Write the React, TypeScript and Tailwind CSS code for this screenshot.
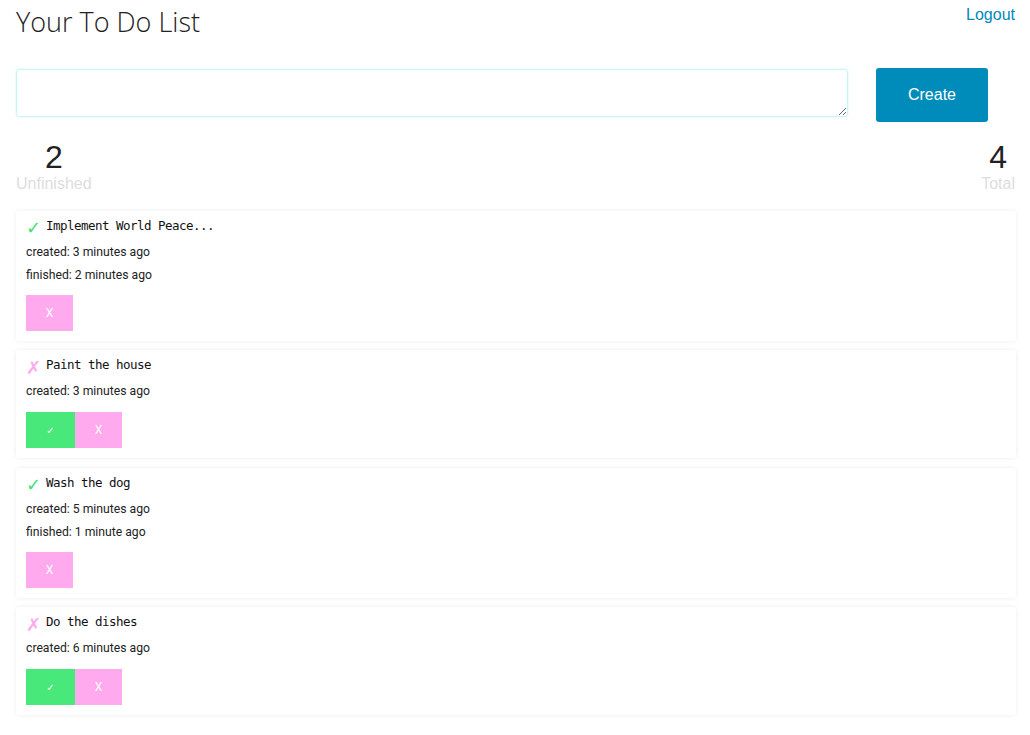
import React from "react";

type Todo = {
  title: string;
  done: boolean;
  created: string;
  finished?: string;
};

const todos: Todo[] = [
  { title: "Implement World Peace...", done: true, created: "3 minutes ago", finished: "2 minutes ago" },
  { title: "Paint the house", done: false, created: "3 minutes ago" },
  { title: "Wash the dog", done: true, created: "5 minutes ago", finished: "1 minute ago" },
  { title: "Do the dishes", done: false, created: "6 minutes ago" },
];

function Card({ t }: { t: Todo }) {
  return (
    <div className="bg-white rounded-[3px] shadow-[0_0_4px_rgba(0,0,0,0.08)] pt-[6px] pb-[10px] px-[10px]">
      <div className="flex items-center h-[18px]">
        {t.done ? (
          <span className="w-[20px] text-[#44dd77] text-[18px] leading-[18px] font-['DejaVu_Sans',sans-serif] mt-[5px]">✓</span>
        ) : (
          <span className="w-[20px] text-[#ffaaee] text-[18px] leading-[18px] font-['DejaVu_Sans',sans-serif] mt-[5px]">✗</span>
        )}
        <span className="font-['DejaVu_Sans_Mono',monospace] text-[12.5px] tracking-[-0.53px] leading-[18px] text-[#111]">{t.title}</span>
      </div>
      <div className="mt-[8px] h-[18px] leading-[18px] text-[12.2px] text-[#222] font-['Roboto',sans-serif]">
        created: {t.created}
      </div>
      {t.finished && (
        <div className="mt-[5px] h-[18px] leading-[18px] text-[12.2px] text-[#222] font-['Roboto',sans-serif]">
          finished: {t.finished}
        </div>
      )}
      <div className={(t.finished ? "mt-[11px]" : "mt-[12px]") + " flex h-[36px]"}>
        {!t.done && (
          <button className="w-[49px] h-[36px] bg-[#48e87a] text-white text-[10px] font-['DejaVu_Sans',sans-serif] flex items-center justify-center">
            ✓
          </button>
        )}
        <button className="w-[47px] h-[36px] bg-[#ffaaee] text-white text-[12px] font-['Roboto',sans-serif] flex items-center justify-center">
          X
        </button>
      </div>
    </div>
  );
}

export default function App() {
  return (
    <div className="min-h-screen bg-white pl-4 pr-[14px] font-['Liberation_Sans',Arial,sans-serif]">
      <div className="flex justify-between items-start">
        <h1 className="mt-[5px] text-[27px] leading-[34px] font-light text-[#222] font-['Open_Sans',sans-serif]">
          Your To Do List
        </h1>
        <a className="mt-[5px] mr-[1px] text-[16px] leading-[20px] text-[#0088bb]">Logout</a>
      </div>
      <div className="flex items-start mt-[29px]">
        <textarea className="w-[832px] h-[48px] mt-[1px] border border-[#c9f4fa] rounded-[3px] outline-none shadow-[0_0_2px_rgba(170,238,250,0.6)]" />
        <button className="ml-[28px] w-[112px] h-[54px] bg-[#008cba] rounded-[3px] text-white text-[16px] font-['Liberation_Sans',Arial,sans-serif]">
          Create
        </button>
      </div>
      <div className="flex justify-between mt-[18px] pr-[1px]">
        <div className="flex flex-col items-center">
          <div className="text-[32px] leading-[35px] text-[#222]">2</div>
          <div className="text-[16px] leading-[18px] text-[#dddddd]">Unfinished</div>
        </div>
        <div className="flex flex-col items-center">
          <div className="text-[32px] leading-[35px] text-[#222]">4</div>
          <div className="text-[16px] leading-[18px] text-[#dddddd]">Total</div>
        </div>
      </div>
      <div className="mt-[17.5px] flex flex-col gap-[9.5px] pb-4">
        {todos.map((t, i) => (
          <Card key={i} t={t} />
        ))}
      </div>
    </div>
  );
}
